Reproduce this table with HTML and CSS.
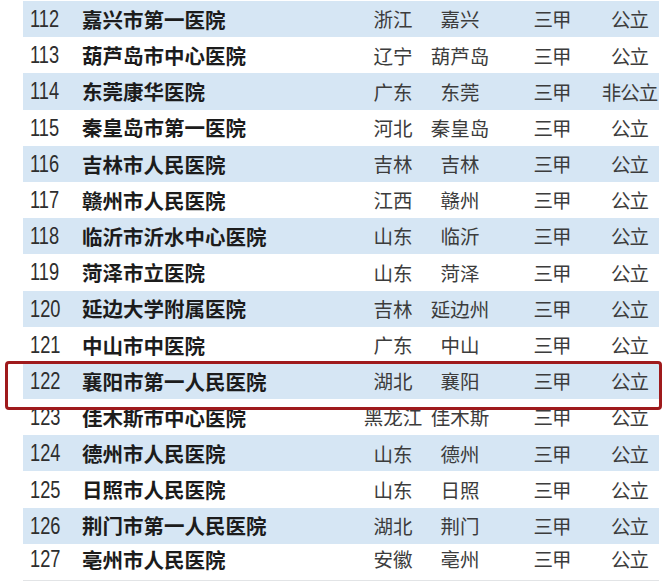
FILE: index.html
```html
<!DOCTYPE html>
<html lang="zh-CN">
<head>
<meta charset="utf-8">
<title>医院排名</title>
<link rel="stylesheet" href="styles.css">
</head>
<body>
<div class="sheet">
  <div class="table">
    <div class="row stripe"><span class="num"><i>112</i></span><span class="name">嘉兴市第一医院</span><span class="prov">浙江</span><span class="city">嘉兴</span><span class="level">三甲</span><span class="type">公立</span></div>
    <div class="row"><span class="num"><i>113</i></span><span class="name">葫芦岛市中心医院</span><span class="prov">辽宁</span><span class="city">葫芦岛</span><span class="level">三甲</span><span class="type">公立</span></div>
    <div class="row stripe"><span class="num"><i>114</i></span><span class="name">东莞康华医院</span><span class="prov">广东</span><span class="city">东莞</span><span class="level">三甲</span><span class="type">非公立</span></div>
    <div class="row"><span class="num"><i>115</i></span><span class="name">秦皇岛市第一医院</span><span class="prov">河北</span><span class="city">秦皇岛</span><span class="level">三甲</span><span class="type">公立</span></div>
    <div class="row stripe"><span class="num"><i>116</i></span><span class="name">吉林市人民医院</span><span class="prov">吉林</span><span class="city">吉林</span><span class="level">三甲</span><span class="type">公立</span></div>
    <div class="row"><span class="num"><i>117</i></span><span class="name">赣州市人民医院</span><span class="prov">江西</span><span class="city">赣州</span><span class="level">三甲</span><span class="type">公立</span></div>
    <div class="row stripe"><span class="num"><i>118</i></span><span class="name">临沂市沂水中心医院</span><span class="prov">山东</span><span class="city">临沂</span><span class="level">三甲</span><span class="type">公立</span></div>
    <div class="row"><span class="num"><i>119</i></span><span class="name">菏泽市立医院</span><span class="prov">山东</span><span class="city">菏泽</span><span class="level">三甲</span><span class="type">公立</span></div>
    <div class="row stripe"><span class="num"><i>120</i></span><span class="name">延边大学附属医院</span><span class="prov">吉林</span><span class="city">延边州</span><span class="level">三甲</span><span class="type">公立</span></div>
    <div class="row"><span class="num"><i>121</i></span><span class="name">中山市中医院</span><span class="prov">广东</span><span class="city">中山</span><span class="level">三甲</span><span class="type">公立</span></div>
    <div class="row stripe"><span class="num"><i>122</i></span><span class="name">襄阳市第一人民医院</span><span class="prov">湖北</span><span class="city">襄阳</span><span class="level">三甲</span><span class="type">公立</span></div>
    <div class="row"><span class="num"><i>123</i></span><span class="name">佳木斯市中心医院</span><span class="prov">黑龙江</span><span class="city">佳木斯</span><span class="level">三甲</span><span class="type">公立</span></div>
    <div class="row stripe"><span class="num"><i>124</i></span><span class="name">德州市人民医院</span><span class="prov">山东</span><span class="city">德州</span><span class="level">三甲</span><span class="type">公立</span></div>
    <div class="row"><span class="num"><i>125</i></span><span class="name">日照市人民医院</span><span class="prov">山东</span><span class="city">日照</span><span class="level">三甲</span><span class="type">公立</span></div>
    <div class="row stripe"><span class="num"><i>126</i></span><span class="name">荆门市第一人民医院</span><span class="prov">湖北</span><span class="city">荆门</span><span class="level">三甲</span><span class="type">公立</span></div>
    <div class="row last"><span class="num"><i>127</i></span><span class="name">亳州市人民医院</span><span class="prov">安徽</span><span class="city">亳州</span><span class="level">三甲</span><span class="type">公立</span></div>
  </div>
  <div class="highlight"></div>
</div>
</body>
</html>
```

FILE: styles.css
```css
html, body {
  margin: 0;
  padding: 0;
  background: #ffffff;
}

.sheet {
  position: relative;
  width: 664px;
  height: 586px;
  overflow: hidden;
}

.table {
  display: flex;
  flex-direction: column;
  margin-left: 23px;
  width: 636px;
  padding-top: 1px;
}

.row {
  display: grid;
  grid-template-columns: 59px 278px 66px 68px 106px 59px;
  align-items: center;
  height: 36.2px;
  font-family: "Noto Sans CJK SC", "Noto Sans", sans-serif;
  color: #3a3a3a;
}

.row.stripe {
  background: #d6e6f4;
}

.row.last {
  border-bottom: 1px solid #e2e4e6;
  height: 30px;
  padding-bottom: 6px;
}

.num {
  padding-left: 7px;
  font-family: "Liberation Sans", Arial, sans-serif;
  font-size: 24px;
  color: #2e2e2e;
  line-height: 1;
}

.num i {
  display: inline-block;
  font-style: normal;
  transform: scaleX(0.76);
  transform-origin: left center;
}

.name {
  font-size: 20.5px;
  font-weight: 700;
  color: #1c1c1c;
  letter-spacing: 0;
  white-space: nowrap;
  line-height: 1;
}

.prov, .city, .level, .type {
  font-size: 19.5px;
  font-weight: 400;
  text-align: center;
  white-space: nowrap;
  line-height: 1;
  color: #3c3c3c;
}

.level {
  padding-left: 10px;
  letter-spacing: -1px;
}

.type {
  letter-spacing: -1px;
}

.highlight {
  position: absolute;
  left: 5px;
  top: 361px;
  width: 651px;
  height: 43px;
  border: 3px solid #9f1a1c;
  border-radius: 4px;
}
```
